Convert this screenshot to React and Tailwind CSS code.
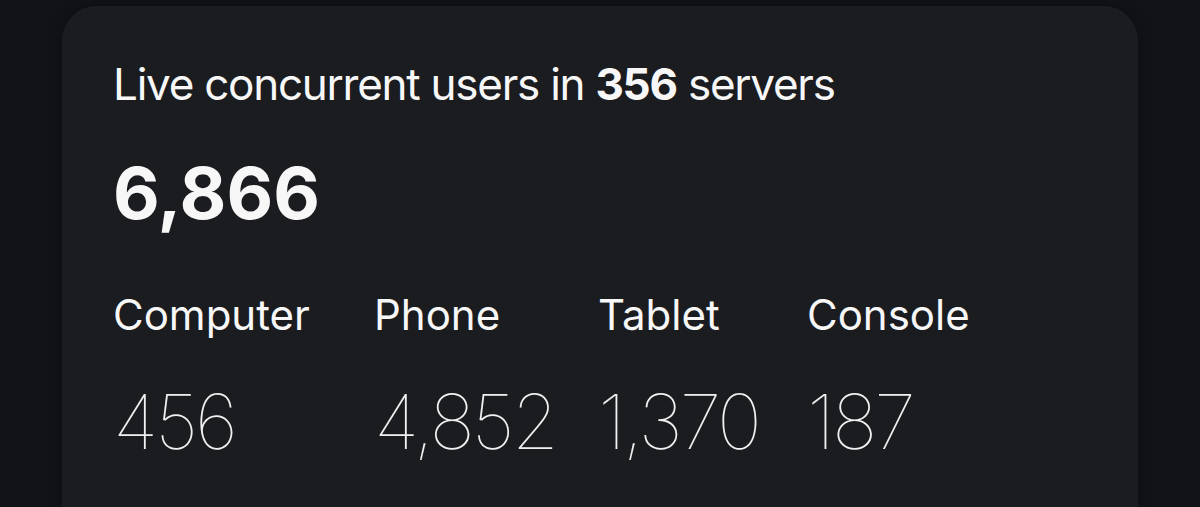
const stats = [
  { label: "Computer", value: "456", w: "w-[261px]" },
  { label: "Phone", value: "4,852", w: "w-[224px]" },
  { label: "Tablet", value: "1,370", w: "w-[209px]" },
  { label: "Console", value: "187", w: "w-[209px]" },
];

export default function App() {
  return (
    <div className="flex h-screen flex-col overflow-hidden bg-[#121317] px-[62px] pt-[6px] font-['Inter',sans-serif] text-[#f7f7f7]">
      <div className="flex-1 rounded-t-[34px] bg-[#1b1c20] px-[51px] pt-[56px] shadow-[0_0_12px_rgba(0,0,0,0.35)]">
        <p className="text-[44px] leading-none font-normal tracking-[-1.25px]">
          Live concurrent users in <span className="font-bold">356</span> servers
        </p>
        <p className="mt-[51px] text-[72px] leading-none font-bold">6,866</p>
        <div className="mt-[65px] flex">
          {stats.map((s) => (
            <div key={s.label} className={`flex flex-col ${s.w}`}>
              <span className="text-[42px] leading-none font-normal">{s.label}</span>
              <span className="mt-[47px] text-[76px] leading-none font-thin tracking-[-3px] text-[#f0f0f0]">
                {s.value}
              </span>
            </div>
          ))}
        </div>
      </div>
    </div>
  );
}
